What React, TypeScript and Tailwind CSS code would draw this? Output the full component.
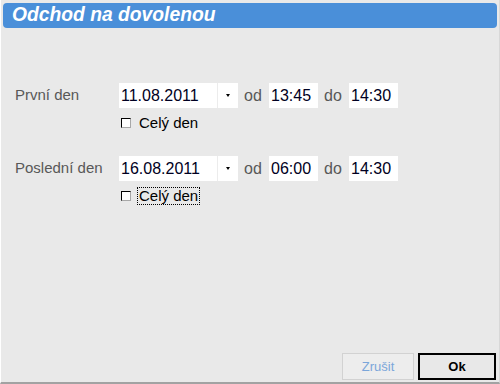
import React from 'react';

const font = { fontFamily: '"Liberation Sans", Arial, sans-serif' };

function DateBox({ value }: { value: string }) {
  return (
    <div className="flex h-[25px] w-[119px] bg-white">
      <div className="flex w-[98px] items-center pl-[2px] text-[16px] text-[#000022]">{value}</div>
      <div className="flex w-[21px] items-center justify-center border-l border-[#ececec]">
        <div className="h-0 w-0 border-x-[2.5px] border-t-[3px] border-x-transparent border-t-black" />
      </div>
    </div>
  );
}

function TimeBox({ value }: { value: string }) {
  return (
    <div className="flex h-[25px] w-[49px] items-center bg-white pl-[2px] text-[16px] text-[#000022]">
      {value}
    </div>
  );
}

function DayRow({
  label,
  date,
  from,
  to,
  focused,
}: {
  label: string;
  date: string;
  from: string;
  to: string;
  focused?: boolean;
}) {
  return (
    <div>
      <div className="flex h-[25px] items-center">
        <span className="w-[104px] text-[15px] text-[#585858]">{label}</span>
        <DateBox value={date} />
        <span className="ml-[6px] w-[25px] text-[16px] text-[#585858]">od</span>
        <TimeBox value={from} />
        <span className="ml-[6px] w-[25px] text-[16px] text-[#585858]">do</span>
        <TimeBox value={to} />
      </div>
      <div className="mt-[7px] flex h-[16px] items-center pl-[106px]">
        <div className="h-[10px] w-[10px] border-b border-l border-r border-t border-b-[#a8a8a8] border-l-black border-r-[#a8a8a8] border-t-black bg-white" />
        <span
          className={`ml-[7px] px-[1px] text-[15px] leading-[16px] text-black ${
            focused ? 'outline outline-1 outline-dotted outline-black' : ''
          }`}
        >
          Celý den
        </span>
      </div>
    </div>
  );
}

export default function App() {
  return (
    <div
      style={font}
      className="flex h-[384px] w-[500px] flex-col border-b-2 border-l border-r border-b-[#a2a2a2] border-l-white border-r-[#d8d8d8] bg-[#e9e9e9]"
    >
      <div className="mx-[2px] mt-[3px] flex h-[25px] items-center rounded-[4px] bg-[#4a8fd9] pl-[9px]">
        <span className="text-[19.3px] font-bold italic text-white">Odchod na dovolenou</span>
      </div>

      <div className="pl-[14px] pt-[55px]">
        <DayRow label="První den" date="11.08.2011" from="13:45" to="14:30" />
        <div className="h-[25px]" />
        <DayRow label="Poslední den" date="16.08.2011" from="06:00" to="14:30" focused />
      </div>

      <div className="mt-auto flex justify-end gap-[4px] pb-[2px] pr-[3px]">
        <button className="h-[27px] w-[72px] border border-[#d2d2d2] bg-[#ededed] text-[13px] text-[#7ba6da]">
          Zrušit
        </button>
        <button className="h-[27px] w-[78px] border-2 border-black bg-[#e8e8e8] text-[13px] font-bold text-black">
          Ok
        </button>
      </div>
    </div>
  );
}
